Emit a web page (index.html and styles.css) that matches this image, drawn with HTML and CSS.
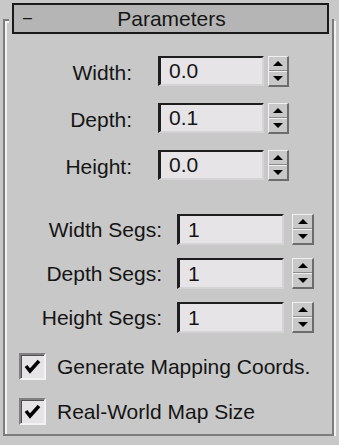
FILE: index.html
```html
<!DOCTYPE html>
<html lang="en">
<head>
    <meta charset="UTF-8">
    <meta name="viewport" content="width=device-width, initial-scale=1.0">
    <title>Parameters</title>
    <link rel="stylesheet" href="styles.css">
</head>
<body>
    <div class="rollout">
        <div class="header">
            <span class="toggle">–</span>
            <span class="title">Parameters</span>
        </div>

        <div class="group">
            <div class="section dims">
                <div class="row">
                    <label class="label">Width:</label>
                    <div class="field">0.0</div>
                    <div class="spinner"><span class="up"></span><span class="down"></span></div>
                </div>
                <div class="row">
                    <label class="label">Depth:</label>
                    <div class="field">0.1</div>
                    <div class="spinner"><span class="up"></span><span class="down"></span></div>
                </div>
                <div class="row">
                    <label class="label">Height:</label>
                    <div class="field">0.0</div>
                    <div class="spinner"><span class="up"></span><span class="down"></span></div>
                </div>
            </div>

            <div class="section segs">
                <div class="row">
                    <label class="label">Width Segs:</label>
                    <div class="field">1</div>
                    <div class="spinner"><span class="up"></span><span class="down"></span></div>
                </div>
                <div class="row">
                    <label class="label">Depth Segs:</label>
                    <div class="field">1</div>
                    <div class="spinner"><span class="up"></span><span class="down"></span></div>
                </div>
                <div class="row">
                    <label class="label">Height Segs:</label>
                    <div class="field">1</div>
                    <div class="spinner"><span class="up"></span><span class="down"></span></div>
                </div>
            </div>

            <div class="section checks">
                <div class="check">
                    <span class="box">
                        <svg width="23" height="23" viewBox="0 0 23 23"><polyline points="5,11 9,16 18,6" fill="none" stroke="#000" stroke-width="3.5"/></svg>
                    </span>
                    <span class="check-label">Generate Mapping Coords.</span>
                </div>
                <div class="check">
                    <span class="box">
                        <svg width="23" height="23" viewBox="0 0 23 23"><polyline points="5,11 9,16 18,6" fill="none" stroke="#000" stroke-width="3.5"/></svg>
                    </span>
                    <span class="check-label">Real-World Map Size</span>
                </div>
            </div>
        </div>
    </div>
</body>
</html>
```

FILE: styles.css
```css
* {
    margin: 0;
    padding: 0;
    box-sizing: border-box;
}
body {
    background-color: #c8c8c8;
    font-family: "Liberation Sans", Arial, sans-serif;
    font-size: 21px;
    color: #151515;
}
.rollout {
    padding-top: 3px;
}

/* title bar */
.header {
    position: relative;
    z-index: 1;
    display: flex;
    align-items: center;
    justify-content: center;
    height: 31px;
    margin: 0 10px 0 12px;
    border: 2px solid #1a1a1a;
    background-color: #b5b5b5;
    box-shadow: 0 0 0 3px #c8c8c8;
}
.header .toggle {
    position: absolute;
    left: 9px;
    top: 4px;
    font-size: 16px;
}
.header .title {
    padding-left: 2px;
}

/* etched group frame */
.group {
    margin: -15px 5px 0 3px;
    padding: 35px 0 9px 0;
    border: 2px solid #7c7c7c;
    box-shadow: inset 2px 2px 0 #f2f2f2, 2px 2px 0 #f2f2f2;
}

.section {
    display: flex;
    flex-direction: column;
}
.row {
    display: flex;
    align-items: center;
}
.label {
    text-align: right;
    padding-top: 4px;
}
.field {
    display: flex;
    align-items: center;
    padding-left: 8px;
    background-color: #e7e4e8;
    border-top: 2px solid #1e1e1e;
    border-left: 3px solid #1e1e1e;
    border-right: 2px solid #d4d4d4;
    border-bottom: 2px solid #d4d4d4;
}

.dims {
    gap: 17px;
}
.dims .row {
    height: 30px;
}
.dims .label {
    width: 127px;
}
.dims .field {
    width: 106px;
    height: 30px;
    margin-left: 26px;
}
.dims .spinner {
    margin-left: 4px;
    width: 21px;
}

.segs {
    margin-top: 34px;
    gap: 13px;
}
.segs .row {
    height: 31px;
}
.segs .label {
    width: 157px;
    padding-top: 0;
}
.segs .field {
    width: 107px;
    height: 31px;
    margin-left: 15px;
}
.segs .spinner {
    margin-left: 8px;
    width: 22px;
}

/* spinner arrows */
.spinner {
    display: flex;
    flex-direction: column;
    height: 31px;
    border-top: 1px solid #f0f0f0;
    border-left: 1px solid #f0f0f0;
    border-right: 2px solid #6c6c6c;
    border-bottom: 2px solid #6c6c6c;
}
.spinner span {
    flex: 1;
    display: flex;
    align-items: center;
    justify-content: center;
}
.spinner .up {
    border-bottom: 1px solid #8c8c8c;
}
.spinner .down {
    border-top: 1px solid #f0f0f0;
}
.spinner .up::after {
    content: "";
    border-left: 5px solid transparent;
    border-right: 5px solid transparent;
    border-bottom: 5px solid #000;
}
.spinner .down::after {
    content: "";
    border-left: 5px solid transparent;
    border-right: 5px solid transparent;
    border-top: 5px solid #000;
}

/* checkboxes */
.checks {
    margin-top: 20px;
    gap: 18px;
}
.check {
    display: flex;
    align-items: center;
    height: 27px;
    padding-left: 14px;
}
.box {
    display: flex;
    align-items: center;
    justify-content: center;
    width: 27px;
    height: 27px;
    background-color: #e7e4e8;
    border-top: 2px solid #808080;
    border-left: 2px solid #808080;
    border-right: 2px solid #f2f2f2;
    border-bottom: 2px solid #f2f2f2;
    box-shadow: inset 1px 1px 0 #505050;
}
.check-label {
    margin-left: 11px;
}
```
